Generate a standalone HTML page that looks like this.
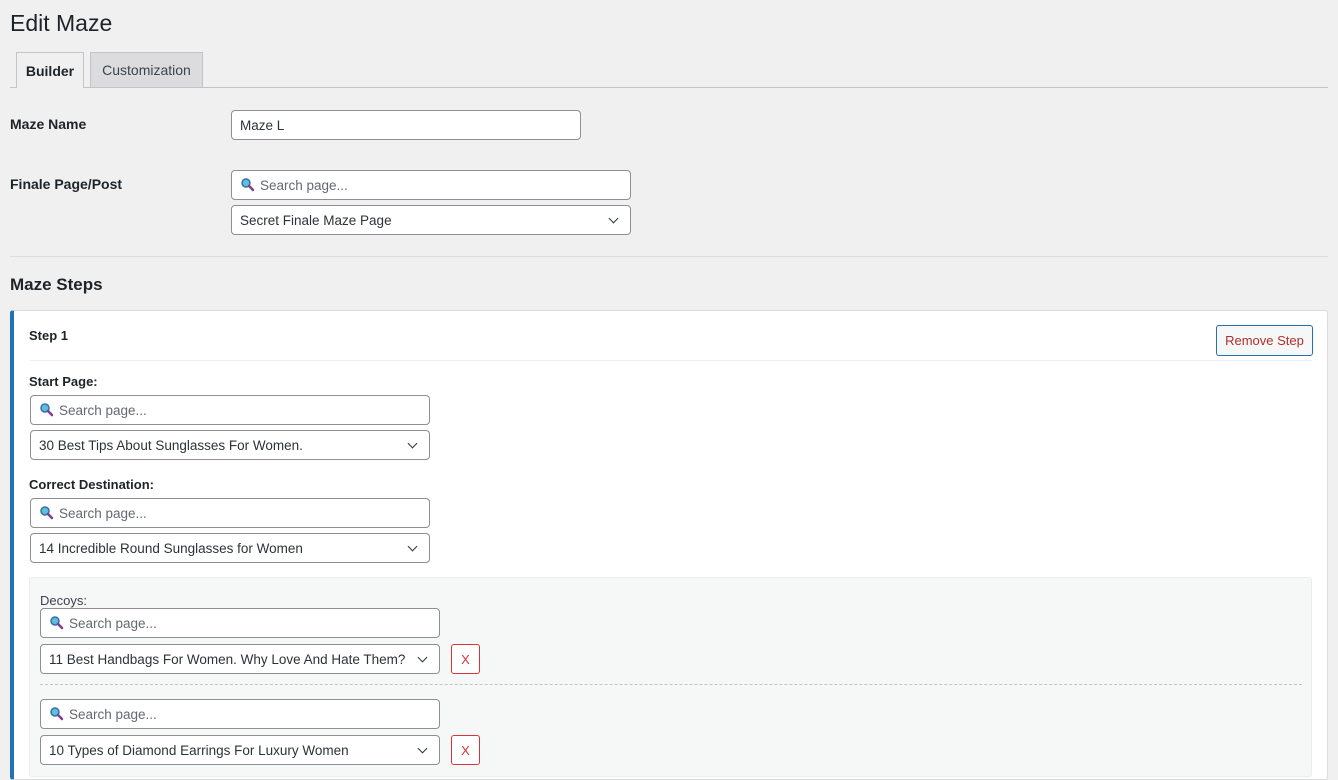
<!DOCTYPE html>
<html><head><style>
*{box-sizing:border-box;margin:0;padding:0}
body{width:1338px;height:765px;overflow:hidden;background:#f0f0f1;font-family:"Liberation Sans",sans-serif;color:#1d2327;position:relative}
.a{position:absolute}
.inp{position:absolute;background:#fff;border:1px solid #8c8f94;border-radius:4px;font-size:13.5px;color:#2c3338;padding-left:8px;display:flex;align-items:center;white-space:nowrap;overflow:hidden;padding-right:28px}
.s{color:#646970;padding-left:28px}
.s svg{position:absolute;left:9px;top:7px}
.sel:after{content:"";position:absolute;right:13px;top:9px;width:6px;height:6px;border-right:1.6px solid #2c3338;border-bottom:1.6px solid #2c3338;transform:rotate(45deg)}
.lb{position:absolute;font-size:14px;font-weight:bold}
.x{position:absolute;width:29px;height:30px;border:1px solid #d63638;border-radius:3px;color:#d63638;font-size:13px;display:flex;align-items:center;justify-content:center;background:#fff}
</style></head><body>
<svg width="0" height="0" style="position:absolute"><defs><g id="m"><circle cx="5" cy="5" r="4" fill="#5bc0de" stroke="#3a6ea5" stroke-width="1.5"/><line x1="8" y1="8" x2="12" y2="12" stroke="#7b3f8f" stroke-width="2.5" stroke-linecap="round"/></g></defs></svg>
<div class="a" style="left:10px;top:10px;font-size:23px;color:#1d2327">Edit Maze</div>
<div class="a" style="left:10px;top:87px;width:1318px;height:1px;background:#c3c4c7"></div>
<div class="a" style="left:16px;top:52px;width:68px;height:36px;background:#f0f0f1;border:1px solid #c3c4c7;border-bottom:none;font-size:14px;font-weight:bold;display:flex;align-items:center;justify-content:center">Builder</div>
<div class="a" style="left:90px;top:52px;width:113px;height:35px;background:#dcdcde;border:1px solid #c3c4c7;border-bottom:none;font-size:14px;color:#3c434a;display:flex;align-items:center;justify-content:center">Customization</div>
<div class="lb" style="left:10px;top:116px">Maze Name</div>
<div class="inp" style="left:231px;top:110px;width:350px;height:30px">Maze L</div>
<div class="lb" style="left:10px;top:176px">Finale Page/Post</div>
<div class="inp s" style="left:231px;top:170px;width:400px;height:30px"><svg width="14" height="14"><use href="#m"/></svg>Search page...</div>
<div class="inp sel" style="left:231px;top:205px;width:400px;height:30px">Secret Finale Maze Page</div>
<div class="a" style="left:10px;top:256px;width:1318px;height:1px;background:#dcdcde"></div>
<div class="a" style="left:10px;top:275px;font-size:17px;font-weight:bold">Maze Steps</div>
<div class="a" style="left:10px;top:310px;width:1318px;height:470px;background:#fff;border:1px solid #dcdcde;border-left:4px solid #2271b1;border-radius:3px"></div>
<div class="a" style="left:29px;top:328px;font-size:13px;font-weight:bold">Step 1</div>
<div class="a" style="left:1216px;top:325px;width:97px;height:31px;border:1px solid #2271b1;border-radius:3px;background:#f6f7f7;color:#b32d2e;font-size:13px;display:flex;align-items:center;justify-content:center">Remove Step</div>
<div class="a" style="left:29px;top:360px;width:1283px;height:1px;background:#f0f0f1"></div>
<div class="lb" style="left:29px;top:374px;font-size:13px">Start Page:</div>
<div class="inp s" style="left:30px;top:395px;width:400px;height:30px"><svg width="14" height="14"><use href="#m"/></svg>Search page...</div>
<div class="inp sel" style="left:30px;top:430px;width:400px;height:30px">30 Best Tips About Sunglasses For Women.</div>
<div class="lb" style="left:29px;top:477px;font-size:13px">Correct Destination:</div>
<div class="inp s" style="left:30px;top:498px;width:400px;height:30px"><svg width="14" height="14"><use href="#m"/></svg>Search page...</div>
<div class="inp sel" style="left:30px;top:533px;width:400px;height:30px">14 Incredible Round Sunglasses for Women</div>
<div class="a" style="left:29px;top:577px;width:1283px;height:200px;background:#f6f7f7;border:1px solid #ececec;border-radius:3px"></div>
<div class="a" style="left:40px;top:593px;font-size:13px;color:#3c434a">Decoys:</div>
<div class="inp s" style="left:40px;top:608px;width:400px;height:30px"><svg width="14" height="14"><use href="#m"/></svg>Search page...</div>
<div class="inp sel" style="left:40px;top:644px;width:400px;height:30px">11 Best Handbags For Women. Why Love And Hate Them?</div>
<div class="x" style="left:451px;top:644px">X</div>
<div class="a" style="left:40px;top:684px;width:1262px;border-top:1px dashed #c3c4c7"></div>
<div class="inp s" style="left:40px;top:699px;width:400px;height:30px"><svg width="14" height="14"><use href="#m"/></svg>Search page...</div>
<div class="inp sel" style="left:40px;top:735px;width:400px;height:30px">10 Types of Diamond Earrings For Luxury Women</div>
<div class="x" style="left:451px;top:735px">X</div>
</body></html>
